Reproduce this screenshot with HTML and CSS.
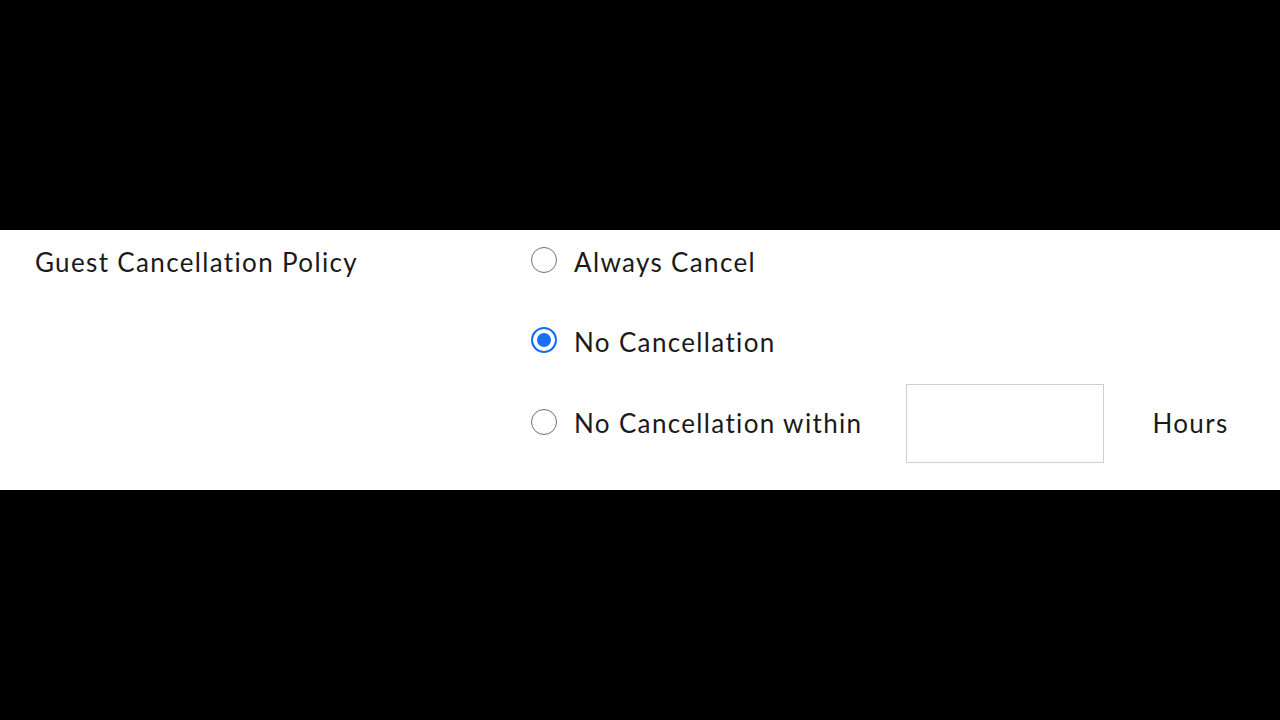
FILE: index.html
```html
<!DOCTYPE html>
<html lang="en">
<head>
<meta charset="utf-8">
<title>Guest Cancellation Policy</title>
<link rel="stylesheet" href="styles.css">
</head>
<body>
<section class="band">
  <div class="field">
    <div class="field-label">Guest Cancellation Policy</div>
    <div class="options">
      <label class="option option-first">
        <input type="radio" name="policy" class="radio">
        <span class="option-text">Always Cancel</span>
      </label>
      <label class="option option-second">
        <input type="radio" name="policy" class="radio" checked>
        <span class="option-text">No Cancellation</span>
      </label>
      <label class="option option-third">
        <input type="radio" name="policy" class="radio">
        <span class="option-text option-text-raised">No Cancellation within</span>
        <input type="text" class="hours-input">
        <span class="option-text option-text-raised">Hours</span>
      </label>
    </div>
  </div>
</section>
</body>
</html>
```
FILE: styles.css
```css
html, body {
  margin: 0;
  padding: 0;
  background: #000;
  width: 1280px;
  height: 720px;
  overflow: hidden;
}

body {
  padding-top: 230px;
  box-sizing: border-box;
  font-family: "Lato", "Liberation Sans", sans-serif;
  color: #1a1a1a;
}

.band {
  background: #fff;
  height: 260px;
  box-sizing: border-box;
  padding: 14px 0 0 35px;
}

.field {
  display: flex;
  align-items: flex-start;
}

.field-label {
  width: 496px;
  height: 36px;
  line-height: 36px;
  font-size: 26px;
  letter-spacing: 1.35px;
}

.options {
  display: flex;
  flex-direction: column;
}

.option {
  display: flex;
  align-items: center;
  min-height: 36px;
}

.option-second {
  margin-top: 44px;
}

.option-third {
  margin-top: 24px;
}

.option-text {
  font-size: 26px;
  line-height: 36px;
  letter-spacing: 1.35px;
}

.option-text-raised {
  margin-top: -2px;
}

.radio {
  appearance: none;
  -webkit-appearance: none;
  margin: 0 17px 0 0;
  width: 26px;
  height: 26px;
  border-radius: 50%;
  border: 1.5px solid #6f6f6f;
  background: #fff;
  box-sizing: border-box;
  position: relative;
  top: -2px;
}

.radio:checked {
  border: 2px solid #1a6ff0;
  box-shadow: inset 0 0 0 4px #fff;
  background: #1a6ff0;
}

.hours-input {
  width: 198px;
  height: 79px;
  box-sizing: border-box;
  border: 1.5px solid #cfcfcf;
  border-radius: 0;
  margin: 0 48px 0 44px;
  padding: 0 8px;
  font-family: inherit;
  font-size: 22px;
  background: #fff;
  outline: none;
}
```
